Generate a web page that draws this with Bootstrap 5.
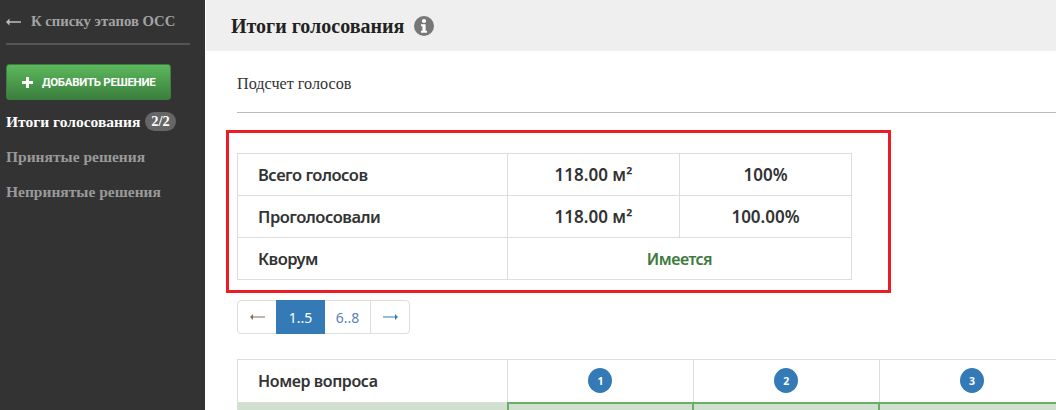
<!DOCTYPE html>
<html lang="ru">
<head>
<meta charset="utf-8">
<title>Итоги голосования</title>
<link href="https://cdn.jsdelivr.net/npm/bootstrap@5.3.0/dist/css/bootstrap.min.css" rel="stylesheet">
<style>
html,body{height:100%;overflow:hidden}
body{background:#fff;font-family:"Liberation Serif",serif;color:#333}
.shell{height:410px}
.side{width:205px;flex:none;background:#333;padding:0 6px;color:#999}
.back{height:45px;margin-bottom:1px;border-bottom:2px solid #555;width:184px;font-size:14.7px;font-weight:700;color:#a3a3a3;gap:10px;text-decoration:none}
.back:hover{color:#a3a3a3}
.back svg{flex:none}
.add{margin-top:19px;width:165px;height:36px;background:linear-gradient(#5cb85c,#3b7f3e);border:1px solid #3d7f40;border-radius:3px;color:#fff;font:700 11.5px "Roboto",sans-serif;gap:9px;padding:0 0 0 15px;letter-spacing:-.27px}
.add:hover{color:#fff}
.menu-link{font-size:15.5px;font-weight:700;color:#999;padding:0;height:35px;display:flex;align-items:center}
.menu-link:hover{color:#999}
.menu-link.on{color:#fff;margin-top:4px}
.count{background:#666;color:#fff;font:700 14.5px "Liberation Serif",serif;border-radius:10px;padding:1px 6px;margin-left:5px}
.main{min-width:0;flex:1;margin-left:1px}
.top{height:51px;background:#efefef;padding-left:25px;gap:10px}
.top h1{font-size:20px;font-weight:700;margin:0;color:#222}
.body-area{padding:0 0 0 20px}
.sub{margin-left:11px;height:62px;border-bottom:1px solid #bbb;font-size:16.2px;color:#333;padding-top:6px}
.mark-box{margin-top:17px;width:665px;height:163px;border:3px solid #ed1c24;padding:20px 0 0 8px}
.sum{width:614px;margin:0;font:600 17px "Noto Sans",sans-serif;table-layout:fixed;--bs-table-border-color:#ddd;color:#333}
.sum td{height:42px;padding:0;vertical-align:middle;color:#333}
.sum td.lab{padding-left:20px;font-size:16.5px;letter-spacing:-.5px}
.ok{color:#3e7a3e!important;font-size:16px;letter-spacing:-.5px}
.pager{margin:7px 0 25px 11px;--bs-pagination-color:#5b7fb8;--bs-pagination-border-color:#ddd;--bs-pagination-active-bg:#337ab7;--bs-pagination-active-border-color:#337ab7;--bs-pagination-border-radius:4px;--bs-pagination-font-size:14px;font-family:"Noto Sans",sans-serif}
.pager .page-link{height:34px;padding:0;display:flex;align-items:center;justify-content:center}
.pager .p1{width:40px;color:#8a6a5c}
.pager .p2{width:49px}
.pager .p3{width:47px;border-right:1px solid #ddd}
.pager .p4{width:40px;color:#337ab7}
.q{margin:0 0 0 11px;width:829px;table-layout:fixed;font:600 16px "Noto Sans",sans-serif;--bs-table-border-color:#ddd;letter-spacing:-.4px}
.q td{height:43px;padding:0;vertical-align:middle;color:#333}
.q td:first-child{width:270px;padding-left:20px}
.num{width:24px;height:25px;background:#337ab7;color:#fff;border-radius:50%;font:700 10.5px "Noto Sans",sans-serif;letter-spacing:0}
.green td{background:#d0dfd0;height:12px}
.green td+td{border:2px solid #6aae6a}
</style>
</head>
<body>
<div class="d-flex shell">
  <aside class="side">
    <a class="back d-flex align-items-center" href="#">
      <svg width="15" height="8" viewBox="0 0 15 8" aria-hidden="true"><path d="M15 3.300H3.500V.6L0 4l3.500 3.400V4.700H15z" fill="#bdbdbd"/></svg>К списку этапов ОСС</a>
    <button class="btn add d-flex align-items-center" type="button">
      <svg width="11" height="11" viewBox="0 0 11 11" aria-hidden="true"><path d="M4 0h3v4h4v3H7v4H4V7H0V4h4z" fill="#fff"/></svg>ДОБАВИТЬ РЕШЕНИЕ
    </button>
    <nav class="nav flex-column">
      <a class="nav-link menu-link on" href="#">Итоги голосования<span class="count">2/2</span></a>
      <a class="nav-link menu-link" href="#">Принятые решения</a>
      <a class="nav-link menu-link" href="#">Непринятые решения</a>
    </nav>
  </aside>
  <main class="main">
    <div class="top d-flex align-items-center">
      <h1>Итоги голосования</h1>
      <svg width="20" height="20" viewBox="0 0 20 20" aria-hidden="true"><circle cx="10" cy="10" r="10" fill="#777"/><circle cx="10" cy="5" r="2.100" fill="#fff"/><path d="M7 8.300h4.600v6.400H13v2H7v-2h1.400v-4.400H7z" fill="#fff"/></svg>
    </div>
    <div class="body-area">
      <div class="sub d-flex align-items-center">Подсчет голосов</div>
      <div class="mark-box">
        <table class="table table-bordered sum">
          <colgroup><col style="width:270px"><col style="width:172px"><col style="width:172px"></colgroup>
          <tr><td class="lab">Всего голосов</td><td class="text-center">118.00 м²</td><td class="text-center">100%</td></tr>
          <tr><td class="lab">Проголосовали</td><td class="text-center">118.00 м²</td><td class="text-center">100.00%</td></tr>
          <tr><td class="lab">Кворум</td><td class="text-center ok" colspan="2">Имеется</td></tr>
        </table>
      </div>
      <ul class="pagination pager">
        <li class="page-item"><a class="page-link p1" href="#"><svg width="15" height="8" viewBox="0 0 15 8" aria-hidden="true"><path d="M15 3.500H3V1L0 4l3 3V4.500h12z" fill="currentColor"/></svg></a></li>
        <li class="page-item active"><a class="page-link p2" href="#">1..5</a></li>
        <li class="page-item"><a class="page-link p3" href="#">6..8</a></li>
        <li class="page-item"><a class="page-link p4" href="#"><svg width="15" height="8" viewBox="0 0 15 8" aria-hidden="true"><path d="M0 3.500h12V1l3 3-3 3V4.500H0z" fill="currentColor"/></svg></a></li>
      </ul>
      <table class="table table-bordered q">
        <tr>
          <td>Номер вопроса</td>
          <td><div class="num d-flex align-items-center justify-content-center mx-auto">1</div></td>
          <td><div class="num d-flex align-items-center justify-content-center mx-auto">2</div></td>
          <td><div class="num d-flex align-items-center justify-content-center mx-auto">3</div></td>
        </tr>
        <tr class="green"><td></td><td></td><td></td><td></td></tr>
      </table>
    </div>
  </main>
</div>
</body>
</html>
